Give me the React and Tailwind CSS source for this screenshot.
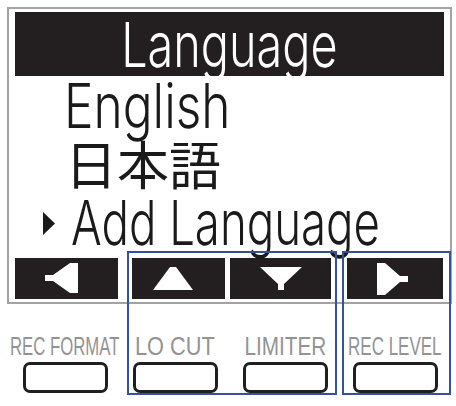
import React from "react";

// Soft keys under the display
const keys = [
  { label: "REC FORMAT", scale: "scale-x-[0.67]" },
  { label: "LO CUT", scale: "scale-x-[0.87]" },
  { label: "LIMITER", scale: "scale-x-[0.83]" },
  { label: "REC LEVEL", scale: "scale-x-[0.68]" },
];

const LeftArrow = () => (
  <svg width="34" height="31" viewBox="0 0 34 31" className="w-[34px] h-[31px] mr-[10px] shrink-0">
    <polygon points="33,0 25,0 8,12 0,12 0,18 8,18 25,30 33,30" fill="#fff" />
  </svg>
);

const UpArrow = () => (
  <svg width="40" height="23" viewBox="0 0 40 23" className="w-[40px] h-[23px] mr-[11px] shrink-0">
    <polygon points="0,23 17,0 23,0 40,23" fill="#fff" />
  </svg>
);

const DownArrow = () => (
  <svg width="42" height="23" viewBox="0 0 42 23" className="w-[42px] h-[23px] shrink-0">
    <polygon points="0,0 42,0 24,17 24,23 18,23 18,17" fill="#fff" />
  </svg>
);

const RightArrow = () => (
  <svg width="32" height="32" viewBox="0 0 32 32" className="w-[32px] h-[32px] mr-[5px] shrink-0">
    <polygon points="0,0 8,0 23,13 31,13 31,19 23,19 8,32 0,32" fill="#fff" />
  </svg>
);

export default function App() {
  return (
    <div className="relative w-[456px] h-[406px] bg-white overflow-hidden font-['Inter','DejaVu_Sans',sans-serif] font-light">
      {/* LCD screen */}
      <div className="ml-[7px] mt-[7px] w-[445px] h-[297px] border-2 border-[#a3a3a3] px-[6px] pt-[3px]">
        <div className="h-[64px] bg-[#231f20] flex justify-center pt-[2px]">
          <span className="inline-block text-[62px] leading-[62px] text-white scale-x-[0.755]">
            Language
          </span>
        </div>

        <div className="mt-[2px] h-[56px] pl-[49px]">
          <span className="inline-block text-[62px] leading-[56px] text-[#1a1a1a] origin-left scale-x-[0.8]">
            English
          </span>
        </div>

        <div className="h-[57px] pl-[50px]">
          <span className="inline-block text-[52px] leading-[57px] text-[#1a1a1a] font-normal font-['Noto_Sans_CJK_JP',sans-serif]">
            日本語
          </span>
        </div>

        <div className="h-[64px] pl-[28px] flex items-start">
          <svg width="12" height="23" viewBox="0 0 12 23" className="w-[12px] h-[23px] mt-[21px] shrink-0">
            <polygon points="0,0 12,11.5 0,23" fill="#1a1a1a" />
          </svg>
          <span className="shrink-0 ml-[16px] inline-block text-[62px] leading-[64px] text-[#1a1a1a] whitespace-nowrap origin-left scale-x-[0.735]">
            Add Language
          </span>
        </div>

        {/* soft key bar */}
        <div className="mt-[3px] h-[41px] flex">
          <div className="w-[103px] bg-[#231f20] flex items-center justify-center">
            <LeftArrow />
          </div>
          <div className="ml-[14px] w-[93px] bg-[#231f20] flex items-center justify-center">
            <UpArrow />
          </div>
          <div className="ml-[5px] w-[101px] bg-[#231f20] flex items-center justify-center">
            <DownArrow />
          </div>
          <div className="ml-[16px] w-[96px] bg-[#231f20] flex items-center justify-center">
            <RightArrow />
          </div>
        </div>
      </div>

      {/* hardware keys */}
      <div className="mt-[30px] ml-[10px] grid grid-cols-[110px_110px_110px_110px]">
        {keys.map((k) => (
          <div key={k.label} className="flex flex-col items-center">
            <span
              className={`inline-block whitespace-nowrap text-[25px] leading-[25px] font-normal text-[#939393] font-['Liberation_Sans',Arial,sans-serif] ${k.scale}`}
            >
              {k.label}
            </span>
            <div className="mt-[3px] w-[85px] h-[31px] border-[3px] border-[#1f1f1f] rounded-[7px] bg-white" />
          </div>
        ))}
      </div>

      {/* highlight boxes */}
      <div className="absolute left-[127px] top-[251px] w-[210px] h-[144px] border-2 border-[#35519d]" />
      <div className="absolute left-[342px] top-[251px] w-[109px] h-[144px] border-2 border-[#35519d]" />
    </div>
  );
}
